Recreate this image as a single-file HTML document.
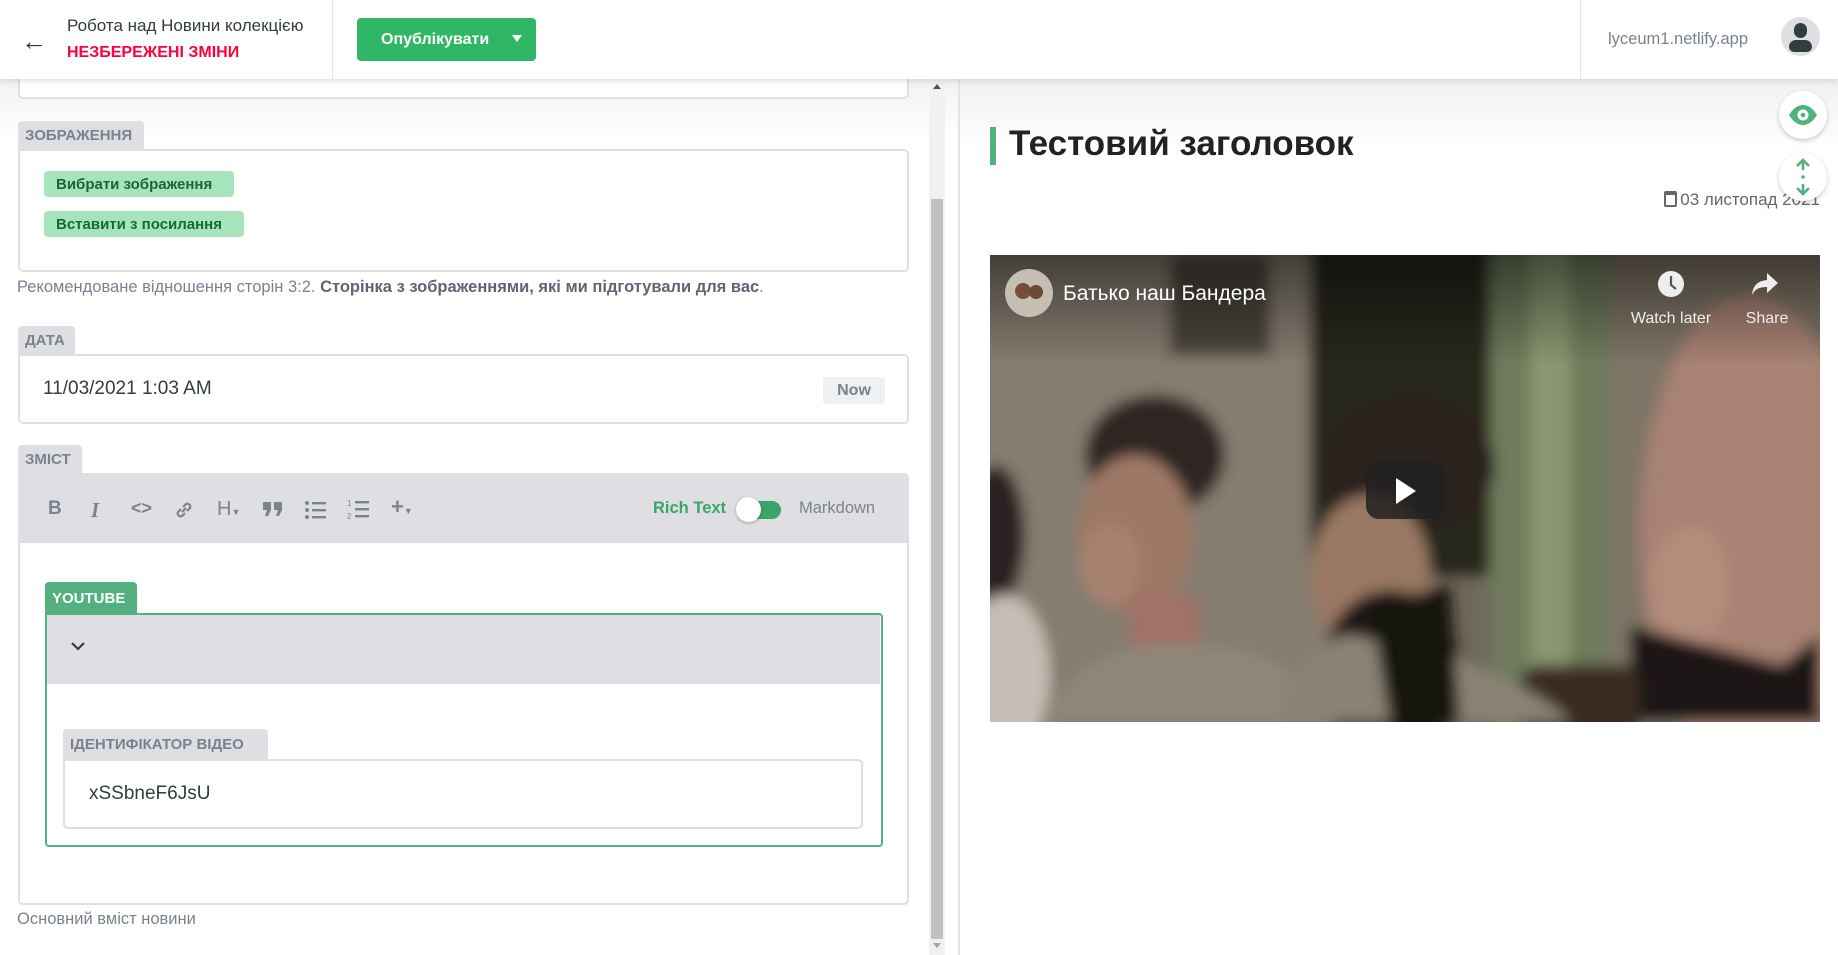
<!DOCTYPE html>
<html><head><meta charset="utf-8"><style>
*{box-sizing:border-box;margin:0;padding:0}
body{width:1838px;height:955px;overflow:hidden;background:#fff;font-family:"Liberation Sans","Noto Sans CJK SC",sans-serif;position:relative;color:#313d3e}
.abs{position:absolute}
.hdr{left:0;top:0;width:1838px;height:79px;background:#fff;box-shadow:0 2px 6px rgba(0,0,0,.12);z-index:5}
.lbl{position:absolute;background:#dfdfe3;color:#798291;font-weight:bold;font-size:15px;padding:0 7px;border-radius:4px 4px 0 0;display:flex;align-items:center}
.box{position:absolute;border:2px solid #dfdfe3;border-radius:0 5px 5px 5px;background:#fff}
.gbtn{position:absolute;background:#a6e5bb;color:#1b6632;font-weight:bold;font-size:15px;border-radius:4px;display:flex;align-items:center;padding-left:12px}
.tb{position:absolute;top:498px;color:#7b8290;font-size:19px;font-weight:bold}
</style></head><body>
<div class="abs" style="left:0;top:79px;width:958px;height:876px;background:linear-gradient(#f2f2f3,#fff 60px)"></div>
<div class="abs" style="left:960px;top:79px;width:878px;height:876px;background:linear-gradient(#f0f0f1,#fff 70px)"></div>
<div class="abs" style="left:958px;top:79px;width:2px;height:876px;background:#e3e3e6"></div>

<div class="abs hdr">
 <div class="abs" style="left:21px;top:26px;font-size:26px;color:#333">&#8592;</div>
 <div class="abs" style="left:67px;top:16px;font-size:17px;color:#313d3e">Робота над Новини колекцією</div>
 <div class="abs" style="left:67px;top:44px;font-size:16px;font-weight:bold;color:#ff003b">НЕЗБЕРЕЖЕНІ ЗМІНИ</div>
 <div class="abs" style="left:332px;top:0;width:1px;height:79px;background:#e3e3e6"></div>
 <div class="abs" style="left:357px;top:18px;width:179px;height:43px;background:#2fb765;border-radius:4px;color:#fff;font-weight:bold;font-size:16px;line-height:43px;padding-left:24px">Опублікувати<span style="position:absolute;left:155px;top:17px;width:0;height:0;border-left:5px solid transparent;border-right:5px solid transparent;border-top:7px solid #fff"></span></div>
 <div class="abs" style="left:1580px;top:0;width:1px;height:79px;background:#e3e3e6"></div>
 <div class="abs" style="left:1608px;top:30px;font-size:16.5px;color:#798291">lyceum1.netlify.app</div>
 <div class="abs" style="left:1781px;top:17px;width:39px;height:39px;border-radius:50%;background:#dfdfe3;overflow:hidden">
  <div class="abs" style="left:13px;top:6px;width:13px;height:15px;border-radius:7px;background:#313d3e"></div>
  <div class="abs" style="left:8px;top:23px;width:23px;height:12px;border-radius:8px 8px 6px 6px;background:#313d3e"></div>
 </div>
</div>

<div class="box" style="left:18px;top:60px;width:891px;height:39px;border-radius:5px"></div>
<div class="lbl" style="left:18px;top:121px;width:126px;height:29px">ЗОБРАЖЕННЯ</div>
<div class="box" style="left:18px;top:149px;width:891px;height:123px"></div>
<div class="gbtn" style="left:44px;top:171px;width:190px;height:26px">Вибрати зображення</div>
<div class="gbtn" style="left:44px;top:211px;width:200px;height:26px">Вставити з посилання</div>
<div class="abs" style="left:17px;top:278px;font-size:16.5px;color:#798291;white-space:nowrap">Рекомендоване відношення сторін 3:2. <b style="color:#5e6674">Сторінка з зображеннями, які ми підготували для вас</b>.</div>

<div class="lbl" style="left:18px;top:326px;width:57px;height:29px">ДАТА</div>
<div class="box" style="left:18px;top:354px;width:891px;height:70px"></div>
<div class="abs" style="left:43px;top:378px;font-size:19px;color:#313d3e">11/03/2021 1:03 AM</div>
<div class="abs" style="left:823px;top:377px;width:62px;height:27px;background:#eff0f3;border-radius:3px;color:#798291;font-weight:bold;font-size:16px;text-align:center;line-height:27px">Now</div>

<div class="lbl" style="left:18px;top:445px;width:64px;height:29px">ЗМІСТ</div>
<div class="box" style="left:18px;top:473px;width:891px;height:432px;border-radius:0 5px 5px 5px"></div>
<div class="abs" style="left:18px;top:473px;width:891px;height:70px;background:#dfdfe3;border-radius:0 5px 0 0"></div>
<div class="tb" style="left:48px">B</div>
<div class="tb" style="left:91px;font-style:italic;font-family:'Liberation Serif',serif;font-size:21px">I</div>
<div class="tb" style="left:131px;font-size:18px">&lt;&gt;</div>
<svg class="abs" style="left:173px;top:499px" width="22" height="22" viewBox="0 0 22 22" fill="none" stroke="#7b8290" stroke-width="2.2"><path d="M9 13l4-4M8 10l-3 3a3 3 0 004 4l3-3M14 12l3-3a3 3 0 00-4-4l-3 3"/></svg>
<div class="tb" style="left:217px;font-weight:normal;font-size:20px">H<span style="font-size:9px">▼</span></div>
<svg class="abs" style="left:262px;top:501px" width="22" height="16" viewBox="0 0 22 16" fill="#7b8290"><path d="M1 1h8v8l-3 6H3l2-6H1zM12 1h8v8l-3 6h-3l2-6h-4z"/></svg>
<svg class="abs" style="left:304px;top:499px" width="24" height="22" viewBox="0 0 24 22" fill="#7b8290"><circle cx="3" cy="4" r="2"/><circle cx="3" cy="11" r="2"/><circle cx="3" cy="18" r="2"/><rect x="8" y="3" width="14" height="2.4"/><rect x="8" y="10" width="14" height="2.4"/><rect x="8" y="17" width="14" height="2.4"/></svg>
<svg class="abs" style="left:347px;top:497px" width="26" height="24" viewBox="0 0 26 24" fill="#7b8290"><text x="0" y="9" font-size="8" font-family="Liberation Sans">1</text><text x="0" y="22" font-size="8" font-family="Liberation Sans">2</text><rect x="8" y="4" width="14" height="2.4"/><rect x="8" y="11" width="14" height="2.4"/><rect x="8" y="18" width="14" height="2.4"/></svg>
<div class="tb" style="left:391px;font-size:22px;top:494px">+<span style="font-size:9px">▼</span></div>
<div class="abs" style="left:653px;top:499px;color:#3aa56a;font-weight:bold;font-size:16.5px">Rich Text</div>
<div class="abs" style="left:740px;top:501px;width:41px;height:18px;border-radius:9px;background:#3aa56a"></div>
<div class="abs" style="left:736px;top:497px;width:25px;height:25px;border-radius:50%;background:#fff;box-shadow:0 1px 3px rgba(0,0,0,.3)"></div>
<div class="abs" style="left:799px;top:499px;color:#798291;font-size:16.5px">Markdown</div>

<div class="abs" style="left:45px;top:582px;width:92px;height:32px;background:#52b17d;border-radius:4px 4px 0 0;color:#fff;font-weight:bold;font-size:15px;padding:8px 0 0 7px">YOUTUBE</div>
<div class="abs" style="left:45px;top:613px;width:838px;height:234px;border:2px solid #52b17d;border-radius:0 4px 4px 4px;background:#fff"></div>
<div class="abs" style="left:47px;top:615px;width:833px;height:69px;background:#dfdfe3"></div>
<svg class="abs" style="left:70px;top:640px" width="16" height="12" viewBox="0 0 16 12" fill="none" stroke="#313d3e" stroke-width="2.2"><path d="M2 3l6 6 6-6"/></svg>
<div class="lbl" style="left:63px;top:729px;width:205px;height:31px">ІДЕНТИФІКАТОР ВІДЕО</div>
<div class="box" style="left:63px;top:759px;width:800px;height:70px"></div>
<div class="abs" style="left:89px;top:783px;font-size:19px;color:#313d3e">xSSbneF6JsU</div>
<div class="abs" style="left:17px;top:910px;font-size:16.5px;color:#798291">Основний вміст новини</div>

<div class="abs" style="left:929px;top:79px;width:16px;height:876px;background:#f1f1f1"></div>
<div class="abs" style="left:931px;top:199px;width:12px;height:740px;background:#c1c1c1"></div>
<div class="abs" style="left:933px;top:84px;border-left:4px solid transparent;border-right:4px solid transparent;border-bottom:5px solid #505050"></div>
<div class="abs" style="left:933px;top:943px;border-left:4px solid transparent;border-right:4px solid transparent;border-top:5px solid #a3a3a3"></div>

<div class="abs" style="left:990px;top:127px;width:6px;height:38px;background:#52b17d"></div>
<div class="abs" style="left:1009px;top:124px;font-size:35px;font-weight:bold;color:#222">Тестовий заголовок</div>
<div class="abs" style="left:1651px;top:190px;font-size:17px;color:#666;width:169px;text-align:right;white-space:nowrap"><span style="display:inline-block;width:13px;height:16px;border:2px solid #666;border-top-width:4px;border-radius:2px;vertical-align:-2px;margin-right:3px"></span>03 листопад 2021</div>
<div class="abs" style="left:1779px;top:91px;width:48px;height:48px;border-radius:50%;background:#fff;box-shadow:0 2px 5px rgba(0,0,0,.2)"><svg style="position:absolute;left:9px;top:13px" width="30" height="22" viewBox="0 0 30 22"><path d="M1 11C6 3 11 1 15 1s9 2 14 10c-5 8-10 10-14 10S6 19 1 11z" fill="#52b17d"/><circle cx="15" cy="11" r="5.5" fill="#fff"/><circle cx="15" cy="11" r="2.3" fill="#52b17d"/></svg></div>
<div class="abs" style="left:1779px;top:153px;width:48px;height:48px;border-radius:50%;background:#fff;box-shadow:0 2px 5px rgba(0,0,0,.2)"><svg style="position:absolute;left:12px;top:5px" width="24" height="38" viewBox="0 0 24 38" fill="none" stroke="#52b17d" stroke-width="2.6"><path d="M12 2v10M6 8l6-6 6 6M12 26v10M6 30l6 6 6-6"/><circle cx="12" cy="19" r="1.8" fill="#52b17d" stroke="none"/></svg></div>

<svg class="abs" style="left:990px;top:255px" width="830" height="467" viewBox="0 0 830 467">
<defs><filter id="b" x="-20%" y="-20%" width="140%" height="140%"><feGaussianBlur stdDeviation="7"/></filter>
<linearGradient id="t" x1="0" y1="0" x2="0" y2="1"><stop offset="0" stop-color="#000" stop-opacity=".5"/><stop offset="1" stop-color="#000" stop-opacity="0"/></linearGradient></defs>
<rect width="830" height="467" fill="#6e685c"/>
<g filter="url(#b)">
<rect x="-20" y="-20" width="360" height="520" fill="#847d70"/>
<rect x="180" y="0" width="100" height="100" fill="#4a443a"/>
<rect x="320" y="-20" width="190" height="340" fill="#28261e"/>
<rect x="500" y="-20" width="140" height="520" fill="#6f7a5c"/>
<rect x="540" y="-20" width="40" height="520" fill="#8a9670"/>
<rect x="620" y="-20" width="230" height="520" fill="#7f7466"/>
<ellipse cx="760" cy="280" rx="110" ry="240" fill="#a88273"/>
<ellipse cx="700" cy="330" rx="40" ry="60" fill="#b48c7c"/>
<path d="M720 467L830 380V467z" fill="#151312"/>
<path d="M640 467V370L830 420V467z" fill="#1a1716"/>
<rect x="530" y="410" width="120" height="80" rx="20" fill="#3a2a20"/>
<ellipse cx="5" cy="280" rx="30" ry="70" fill="#2a2320"/>
<ellipse cx="15" cy="420" rx="45" ry="80" fill="#c4beb4"/>
<ellipse cx="165" cy="200" rx="70" ry="60" fill="#2e2520"/>
<ellipse cx="145" cy="280" rx="58" ry="80" fill="#9e7866"/>
<ellipse cx="120" cy="310" rx="30" ry="40" fill="#a88270"/>
<rect x="140" y="340" width="70" height="70" fill="#a07268"/>
<path d="M60 467Q80 400 160 390Q270 385 300 420L320 467z" fill="#8e877a"/>
<ellipse cx="420" cy="210" rx="85" ry="70" fill="#2a211c"/>
<ellipse cx="380" cy="320" rx="60" ry="80" fill="#9a7864"/>
<ellipse cx="400" cy="420" rx="70" ry="85" fill="#1a1614"/>
<path d="M290 467Q300 390 360 380L460 400Q560 440 580 467z" fill="#8a8275"/>
<path d="M380 350L460 330L470 467H400z" fill="#161311"/>
</g>
<rect width="830" height="110" fill="url(#t)"/>
<circle cx="39" cy="38" r="24" fill="#c5bfb3"/><circle cx="33" cy="36" r="8" fill="#7a4a3a"/><circle cx="46" cy="37" r="7" fill="#6a4a30"/>
<text x="73" y="45" font-size="21" fill="#fff" font-family="Liberation Sans">Батько наш Бандера</text>
<circle cx="681" cy="29" r="13" fill="#eee"/><path d="M681 21v9l5 4" stroke="#555" stroke-width="2.2" fill="none"/>
<text x="681" y="68" font-size="16" fill="#eee" text-anchor="middle" font-family="Liberation Sans">Watch later</text>
<path d="M777 18l11 10-11 10v-6c-8 0-12 2-15 8 1-9 5-14 15-15z" fill="#eee"/>
<text x="777" y="68" font-size="16" fill="#eee" text-anchor="middle" font-family="Liberation Sans">Share</text>
<rect x="376" y="207" width="80" height="57" rx="13" fill="#212121" fill-opacity=".85"/>
<path d="M406 223l20 13-20 13z" fill="#fff"/>
</svg>
</body></html>
